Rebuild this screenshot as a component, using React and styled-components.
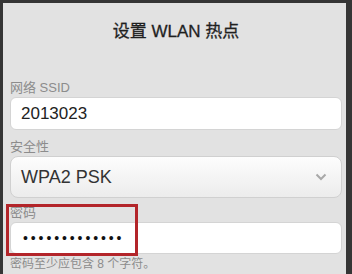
import React from "react";
import styled, { createGlobalStyle } from "styled-components";

const Global = createGlobalStyle`
  html, body { margin: 0; padding: 0; background: #353535; }
  body { font-family: "Noto Sans CJK SC", "Liberation Sans", sans-serif; }
`

const Page = styled.div`
  width: 352px;
  height: 274px;
  box-sizing: border-box;
  padding: 3px 6px 0 3px;
  background: #353535;
  overflow: hidden;
`

const Dialog = styled.div`
  height: 100%;
  background: #e2e2e2;
  padding: 0 4px 0 7px;
  box-sizing: border-box;
`

const Title = styled.div`
  padding: 17px 0 36px;
  text-align: center;
  font-size: 17px;
  line-height: 24px;
  color: #1f1f1f;
  font-family: "Liberation Sans", "Noto Sans CJK SC", sans-serif;
  -webkit-text-stroke: 0.3px #1f1f1f;
`

const Label = styled.div`
  font-size: 13px;
  line-height: 16px;
  color: #8c8c8c;
  font-family: "Liberation Sans", "Noto Sans CJK SC", sans-serif;
  margin-top: ${p => p.gap || 0}px;
`

const Input = styled.div`
  margin-top: 1px;
  height: ${p => p.h}px;
  box-sizing: border-box;
  background: #fff;
  border: 1px solid #d4d4d4;
  border-radius: 6px;
  display: flex;
  align-items: center;
  padding-left: 10px;
  font-size: 17px;
  color: #222;
  font-family: "Liberation Sans", sans-serif;
`

const Select = styled.div`
  margin-top: 1px;
  height: 42px;
  box-sizing: border-box;
  background: linear-gradient(#fdfdfd, #ececec);
  border: 1px solid #d0d0d0;
  border-radius: 8px;
  display: flex;
  align-items: center;
  justify-content: space-between;
  padding: 0 14px 0 10px;
  font-size: 18px;
  color: #333;
  font-family: "Liberation Sans", sans-serif;
`

const Field = styled.div`
  position: relative;
  margin-top: 7px;
`

const Dots = styled.span`
  font-size: 14px;
  letter-spacing: 2.9px;
  color: #111;
  margin-left: 2px;
`

const Highlight = styled.div`
  position: absolute;
  left: -4px;
  top: -1px;
  width: 132px;
  height: 52px;
  box-sizing: border-box;
  border: 3px solid #b3252a;
`

const Hint = styled.div`
  margin-top: 2px;
  font-size: 12px;
  line-height: 16px;
  color: #8c8c8c;
  font-family: "Liberation Sans", "Noto Sans CJK SC", sans-serif;
`

export default function App() {
  return (
    <Page>
      <Global />
      <Dialog>
        <Title>设置 WLAN 热点</Title>
        <Label>网络 SSID</Label>
        <Input h={33}>2013023</Input>
        <Label gap={9}>安全性</Label>
        <Select>
          WPA2 PSK
          <svg width="12" height="8" viewBox="0 0 12 8">
            <path d="M1.5 1.5 L6 6 L10.5 1.5" fill="none" stroke="#a8a8a8" strokeWidth="2" />
          </svg>
        </Select>
        <Field>
          <Label>密码</Label>
          <Input h={32}><Dots>•••••••••••••</Dots></Input>
          <Highlight />
        </Field>
        <Hint>密码至少应包含 8 个字符。</Hint>
      </Dialog>
    </Page>
  )
}
